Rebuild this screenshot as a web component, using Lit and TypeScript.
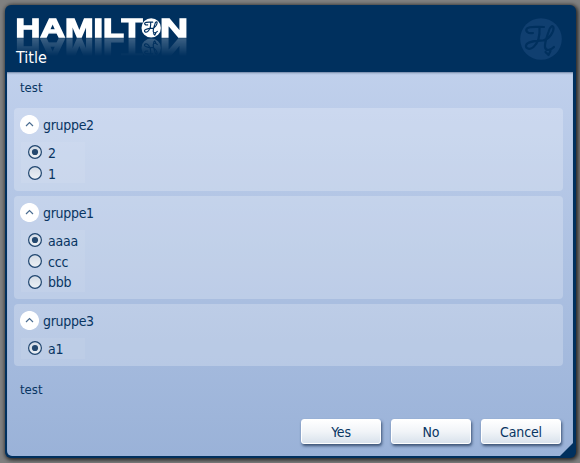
import { LitElement, html, css, svg } from "lit";
import { customElement, property } from "lit/decorators.js";

interface Group { name: string; options: string[]; selected: number; }

const GROUPS: Group[] = [
  { name: "gruppe2", options: ["2", "1"], selected: 0 },
  { name: "gruppe1", options: ["aaaa", "ccc", "bbb"], selected: 0 },
  { name: "gruppe3", options: ["a1"], selected: 0 },
];

// Script monogram, drawn in a 42 x 42 box
const monogram = svg`
  <path d="M13 15 C8 16 5 13 7 10.5 C9 8 16 9 24 9 M19.5 9.5 C20 17 18 25 13.5 29 C10 32 5.5 31 6 27.5 C7 23 16 23 23 22.5 C30 21 34 13 33.5 9.5 C33 6.5 29.5 9 28.5 14 C26.5 20 24.5 25 25 29 C25.5 33 30 33 34 29 M25.5 34 L28.5 37 L30.5 33"
    fill="none" stroke-linecap="round" stroke-linejoin="round"></path>`;

@customElement("brand-logo")
export class BrandLogo extends LitElement {
  static styles = css`
    :host { display: block; height: 38px; }
    svg { display: block; -webkit-box-reflect: below 0 linear-gradient(transparent 10%, rgba(255, 255, 255, .24)); }
    text { font-family: "Liberation Sans", Arial, sans-serif; font-weight: 700; font-size: 26px; fill: #fff; stroke: #fff; stroke-width: 1.3px; }
  `;
  render() {
    return html`<svg width="172" height="20" viewBox="0 0 172 20">
      <text x="-.6" y="18.7" textLength="127" lengthAdjust="spacingAndGlyphs">HAMILT</text>
      <text x="144" y="18.7" textLength="28" lengthAdjust="spacingAndGlyphs">N</text>
      <circle cx="135.2" cy="9.9" r="9.7" fill="#fff"></circle>
      <g transform="translate(125.7 0) scale(.46)" stroke="#003060" stroke-width="2.5">${monogram}</g>
    </svg>`;
  }
}

@customElement("option-group")
export class OptionGroup extends LitElement {
  @property({ attribute: false }) group!: Group;
  static styles = css`
    :host { display: block; box-sizing: border-box; padding: 6px 7px 7px 6px; border-radius: 4px; background: rgba(255, 255, 255, .23); }
    .head { display: flex; align-items: center; height: 21px; gap: 4px; }
    .name { letter-spacing: -.3px; line-height: 20px; }
    svg { display: block; flex: none; }
    .list { width: 64px; box-sizing: border-box; margin: 7px 0 0 1px; padding-left: 7px; background: rgba(255, 255, 255, .07); }
    .option { display: flex; align-items: center; gap: 6px; height: 20.7px; line-height: 20px; white-space: nowrap; letter-spacing: -.2px; }
    .option span { padding-top: 1px; }
  `;
  render() {
    return html`
      <div class="head">
        <svg width="19" height="19" viewBox="0 0 19 19"><circle cx="9.5" cy="9.5" r="9.6" fill="#fff"></circle><path d="M6 11 L9.5 7.5 L13 11" fill="none" stroke="#4b6d91" stroke-width="1.2"></path></svg>
        <span class="name">${this.group.name}</span>
      </div>
      <div class="list">${this.group.options.map((o, i) => html`
        <div class="option">
          <svg width="14" height="14" viewBox="0 0 14 14">
            <defs><linearGradient id="r" x2="0" y2="1"><stop stop-color="#d3dbe6"></stop><stop offset="1" stop-color="#edf1f5"></stop></linearGradient></defs>
            <circle cx="7" cy="7" r="6.4" fill="url(#r)" stroke="#20466f" stroke-width="1.2"></circle>
            ${i === this.group.selected ? svg`<circle cx="7" cy="7" r="3.1" fill="#24486f"></circle>` : ""}
          </svg>
          <span>${o}</span>
        </div>`)}</div>`;
  }
}

@customElement("app-root")
export class AppRoot extends LitElement {
  static styles = css`
    :host { display: block; box-sizing: border-box; height: 463px; padding: 5px 4px 5px 5px; background: #808080; color: #083562; font: 14px/20px "DejaVu Sans Condensed", "DejaVu Sans", sans-serif; font-stretch: condensed; overflow: hidden; }
    .window { display: flex; flex-direction: column; box-sizing: border-box; height: 453px; width: 571px; padding: 0 3px 2px 2px; border-radius: 6px; background: #00305e; box-shadow: 1px 1px 4px 1px rgba(0, 0, 0, .75); }
    header { display: flex; justify-content: space-between; box-sizing: border-box; height: 67px; flex: none; padding: 13px 11px 0 9px; }
    .title { color: #fff; font-size: 16px; line-height: 22px; margin-top: -9px; letter-spacing: 0; position: relative; }
    .brand { display: block; }
    main { position: relative; flex: 1; display: flex; flex-direction: column; box-sizing: border-box; padding: 0 10px 0 7px; border-radius: 0 0 0 5px; background: linear-gradient(#c0d0ec, #9ab2d8); box-shadow: inset 0 2px 2px -1px rgba(30, 55, 90, .5); clip-path: polygon(0 0, 100% 0, 100% calc(100% - 13px), calc(100% - 13px) 100%, 0 100%); }
    .note { padding-left: 6px; font-size: 13px; line-height: 20px; }
    .top { margin-top: 6px; }
    .groups { display: flex; flex-direction: column; gap: 5px; margin-top: 10px; }
    .g0 { height: 83px; } .g1 { height: 103px; } .g2 { height: 62px; }
    .bottom { margin-top: 14px; }
    .actions { display: flex; justify-content: flex-end; gap: 10px; margin: 19px 2px 0 0; }
    button { box-sizing: border-box; width: 80px; height: 25px; padding: 1px 0 0; border: 1px solid #fff; border-radius: 3px; background: linear-gradient(#fff, #f1f4f8 50%, #d9e2ec); color: inherit; font: inherit; line-height: 22px; letter-spacing: -.15px; box-shadow: 1px 2px 3px rgba(25, 48, 82, .75); }
  `;
  render() {
    return html`<div class="window">
      <header>
        <div><brand-logo class="brand"></brand-logo><div class="title">Title</div></div>
        <svg width="42" height="42" viewBox="0 0 42 42"><circle cx="21" cy="21" r="20.8" fill="#103f70"></circle><g stroke="#00305e" stroke-width="2.2">${monogram}</g></svg>
      </header>
      <main>
        <div class="note top">test</div>
        <div class="groups">${GROUPS.map((g, i) => html`<option-group class="g${i}" .group=${g}></option-group>`)}</div>
        <div class="note bottom">test</div>
        <div class="actions"><button>Yes</button><button>No</button><button>Cancel</button></div>
      </main>
    </div>`;
  }
}
